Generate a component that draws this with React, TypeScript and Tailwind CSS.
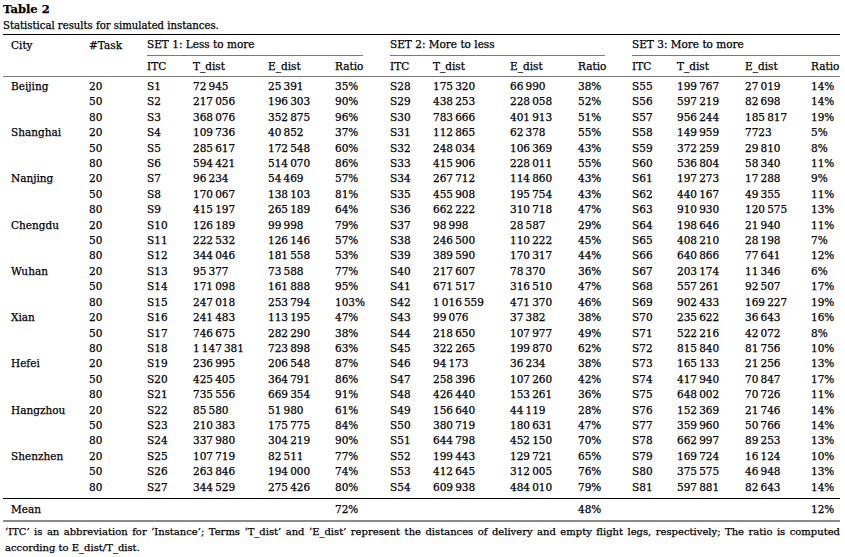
import React from 'react';

const CITIES = ['Beijing', 'Shanghai', 'Nanjing', 'Chengdu', 'Wuhan', 'Xian', 'Hefei', 'Hangzhou', 'Shenzhen'];
const TASKS = ['20', '50', '80'];

const SET1: [number, number, string][] = [
  [72945, 25391, '35%'], [217056, 196303, '90%'], [368076, 352875, '96%'],
  [109736, 40852, '37%'], [285617, 172548, '60%'], [594421, 514070, '86%'],
  [96234, 54469, '57%'], [170067, 138103, '81%'], [415197, 265189, '64%'],
  [126189, 99998, '79%'], [222532, 126146, '57%'], [344046, 181558, '53%'],
  [95377, 73588, '77%'], [171098, 161888, '95%'], [247018, 253794, '103%'],
  [241483, 113195, '47%'], [746675, 282290, '38%'], [1147381, 723898, '63%'],
  [236995, 206548, '87%'], [425405, 364791, '86%'], [735556, 669354, '91%'],
  [85580, 51980, '61%'], [210383, 175775, '84%'], [337980, 304219, '90%'],
  [107719, 82511, '77%'], [263846, 194000, '74%'], [344529, 275426, '80%'],
];

const SET2: [number, number, string][] = [
  [175320, 66990, '38%'], [438253, 228058, '52%'], [783666, 401913, '51%'],
  [112865, 62378, '55%'], [248034, 106369, '43%'], [415906, 228011, '55%'],
  [267712, 114860, '43%'], [455908, 195754, '43%'], [662222, 310718, '47%'],
  [98998, 28587, '29%'], [246500, 110222, '45%'], [389590, 170317, '44%'],
  [217607, 78370, '36%'], [671517, 316510, '47%'], [1016559, 471370, '46%'],
  [99076, 37382, '38%'], [218650, 107977, '49%'], [322265, 199870, '62%'],
  [94173, 36234, '38%'], [258396, 107260, '42%'], [426440, 153261, '36%'],
  [156640, 44119, '28%'], [380719, 180631, '47%'], [644798, 452150, '70%'],
  [199443, 129721, '65%'], [412645, 312005, '76%'], [609938, 484010, '79%'],
];

const SET3: [number, number, string][] = [
  [199767, 27019, '14%'], [597219, 82698, '14%'], [956244, 185817, '19%'],
  [149959, 7723, '5%'], [372259, 29810, '8%'], [536804, 58340, '11%'],
  [197273, 17288, '9%'], [440167, 49355, '11%'], [910930, 120575, '13%'],
  [198646, 21940, '11%'], [408210, 28198, '7%'], [640866, 77641, '12%'],
  [203174, 11346, '6%'], [557261, 92507, '17%'], [902433, 169227, '19%'],
  [235622, 36643, '16%'], [522216, 42072, '8%'], [815840, 81756, '10%'],
  [165133, 21256, '13%'], [417940, 70847, '17%'], [648002, 70726, '11%'],
  [152369, 21746, '14%'], [359960, 50766, '14%'], [662997, 89253, '13%'],
  [169724, 16124, '10%'], [375575, 46948, '13%'], [597881, 82643, '14%'],
];

// thin-space digit grouping, only for 5+ digit numbers
const fmt = (n: number) => {
  const s = String(n);
  if (s.length < 5) return s;
  return s.replace(/\B(?=(\d{3})+(?!\d))/g, '\u2009');
};

const GRID = 'grid grid-cols-[78px_58px_46px_75px_67px_55px_43px_77px_68px_54px_45px_68px_66px_37px]';
const cell = 'pl-2 whitespace-nowrap';

const SetCells = ({ prefix, idx, row }: { prefix: number; idx: number; row: [number, number, string] }) => (
  <>
    <div className={cell}>S{prefix + idx}</div>
    <div className={cell}>{fmt(row[0])}</div>
    <div className={cell}>{fmt(row[1])}</div>
    <div className={cell}>{row[2]}</div>
  </>
);

const App: React.FC = () => {
  return (
    <div className="w-[845px] h-[557px] bg-white text-black overflow-hidden px-[3px] text-[10.5px] leading-[15.42px] font-['DejaVu_Serif',serif] [-webkit-text-stroke:0.25px_black]">
      <div className="pt-[2px] text-[11.5px] leading-[14px] font-bold">Table 2</div>
      <div className="mt-[3px] text-[10.1px] leading-[14px]">Statistical results for simulated instances.</div>

      <div className="w-[837px] mt-[1px] border-t border-black">
        {/* header row 1 */}
        <div className={`${GRID} h-[21px] items-center`}>
          <div className={cell}>City</div>
          <div className={cell}>#Task</div>
          <div className="col-span-4 h-full flex flex-col">
            <div className="flex-1 flex items-center pl-2">SET 1: Less to more</div>
            <div className="ml-2 mr-[19px] border-b border-[#7a7a7a]" />
          </div>
          <div className="col-span-4 h-full flex flex-col">
            <div className="flex-1 flex items-center pl-2">SET 2: More to less</div>
            <div className="ml-2 mr-[19px] border-b border-[#7a7a7a]" />
          </div>
          <div className="col-span-4 h-full flex flex-col">
            <div className="flex-1 flex items-center pl-2">SET 3: More to more</div>
            <div className="ml-2 border-b border-[#7a7a7a]" />
          </div>
        </div>

        {/* header row 2 */}
        <div className={`${GRID} h-[21px] pt-[2px] items-center border-b border-[#7a7a7a]`}>
          <div />
          <div />
          {[0, 1, 2].map((k) => (
            <React.Fragment key={k}>
              <div className={cell}>ITC</div>
              <div className={cell}>T_dist</div>
              <div className={cell}>E_dist</div>
              <div className={cell}>Ratio</div>
            </React.Fragment>
          ))}
        </div>

        {/* body */}
        <div className="pt-[2px] pb-[3px] border-b border-black">
          {SET1.map((r, i) => (
            <div key={i} className={`${GRID} h-[15.42px]`}>
              <div className={cell}>{i % 3 === 0 ? CITIES[i / 3] : ''}</div>
              <div className={cell}>{TASKS[i % 3]}</div>
              <SetCells prefix={1} idx={i} row={r} />
              <SetCells prefix={28} idx={i} row={SET2[i]} />
              <SetCells prefix={55} idx={i} row={SET3[i]} />
            </div>
          ))}
        </div>

        {/* mean row */}
        <div className={`${GRID} h-[23px] items-center border-b-2 border-[#8a8a8a]`}>
          <div className={cell}>Mean</div>
          <div /><div /><div /><div />
          <div className={cell}>72%</div>
          <div /><div /><div />
          <div className={cell}>48%</div>
          <div /><div /><div />
          <div className={cell}>12%</div>
        </div>
      </div>

      <p className="w-[837px] mt-[2px] pl-[2px] text-[10px] leading-[16px] text-justify">
        ‘ITC’ is an abbreviation for ‘Instance’; Terms ‘T_dist’ and ‘E_dist’ represent the distances of delivery and empty flight legs, respectively; The ratio is computed according to E_dist/T_dist.
      </p>
    </div>
  );
};

export default App;
